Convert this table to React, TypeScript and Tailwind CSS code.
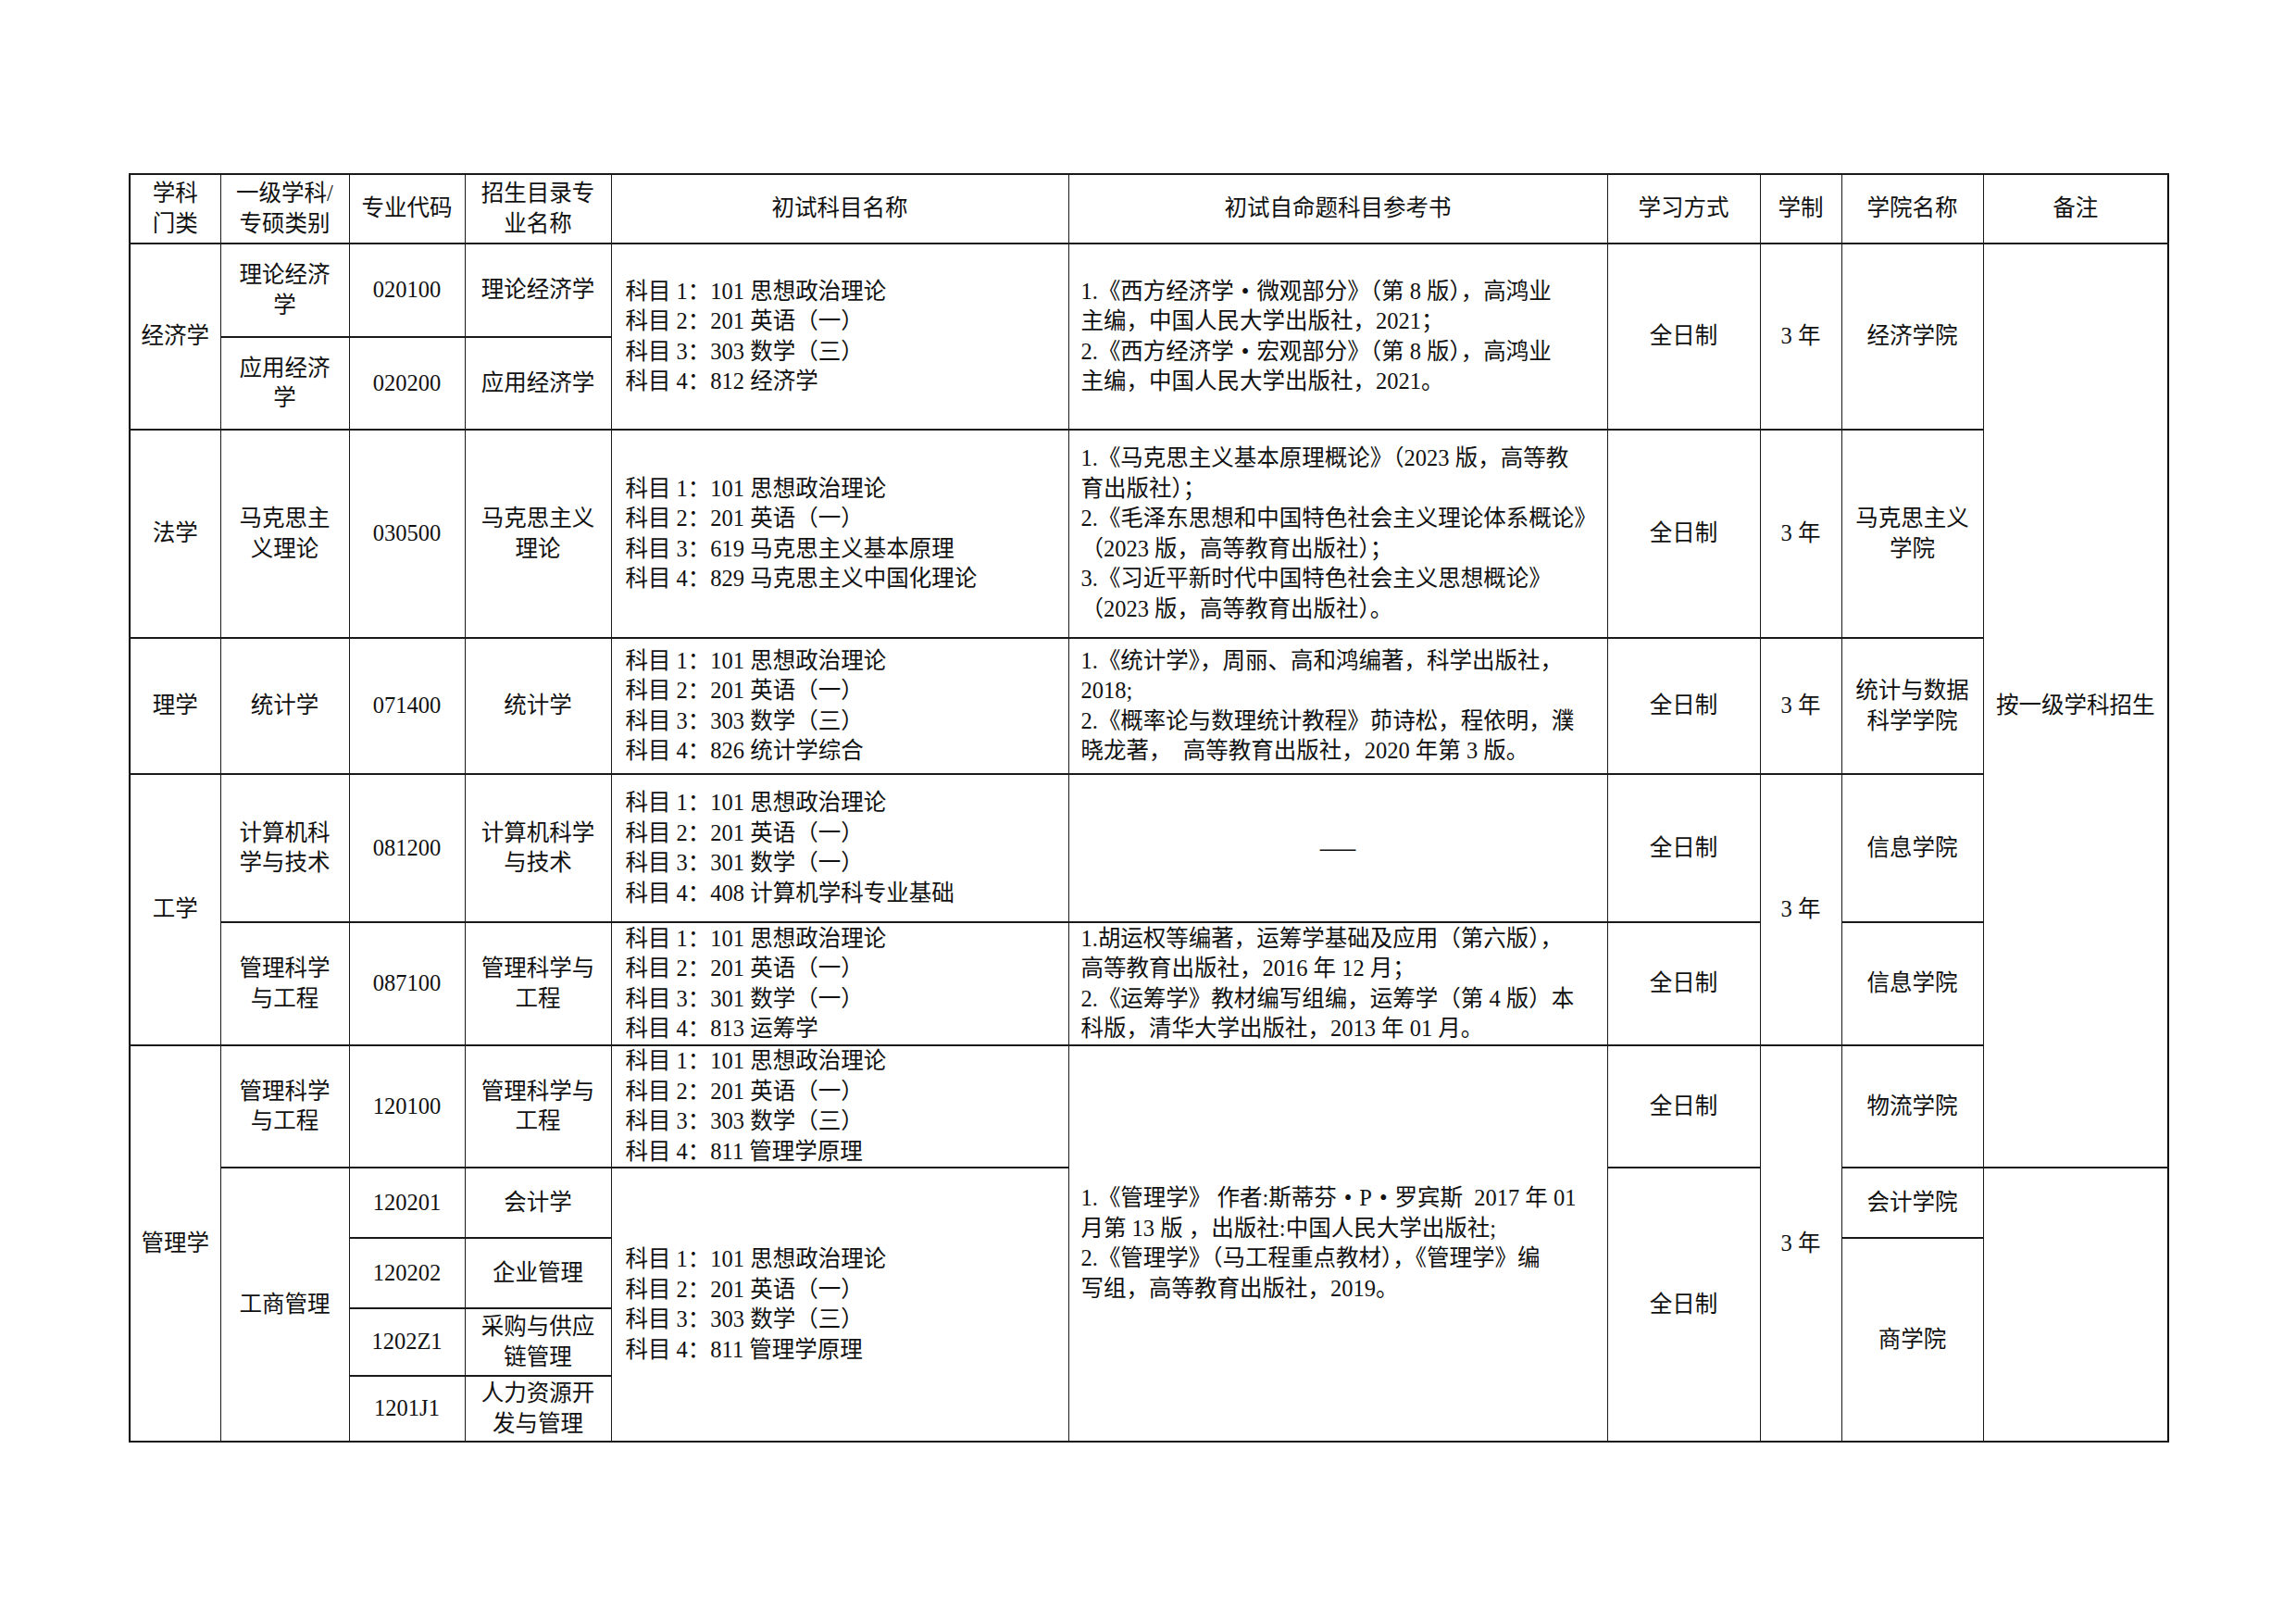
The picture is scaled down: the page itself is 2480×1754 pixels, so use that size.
import React from "react";

const font = { fontFamily: '"Liberation Serif", "Noto Sans CJK SC", serif' };

const cell = "border-x border-y-2 border-[#1a1a1a] text-center align-middle px-1 py-0";
const left = "border-x border-y-2 border-[#1a1a1a] text-left align-middle py-0";

// full-width bullet, as in the source document
function Line({ text }: { text: string }) {
  const parts = text.split("•");
  return (
    <div className="whitespace-pre">
      {parts.map((p, i) => (
        <React.Fragment key={i}>
          {i > 0 && <span className="inline-block w-[1em] text-center">•</span>}
          {p}
        </React.Fragment>
      ))}
    </div>
  );
}

function Lines({ items }: { items: string[] }) {
  return (
    <>
      {items.map((t, i) => (
        <Line key={i} text={t} />
      ))}
    </>
  );
}

const exams = {
  econ: ["科目 1：101 思想政治理论", "科目 2：201 英语（一）", "科目 3：303 数学（三）", "科目 4：812 经济学"],
  law: ["科目 1：101 思想政治理论", "科目 2：201 英语（一）", "科目 3：619 马克思主义基本原理", "科目 4：829 马克思主义中国化理论"],
  stat: ["科目 1：101 思想政治理论", "科目 2：201 英语（一）", "科目 3：303 数学（三）", "科目 4：826 统计学综合"],
  cs: ["科目 1：101 思想政治理论", "科目 2：201 英语（一）", "科目 3：301 数学（一）", "科目 4：408 计算机学科专业基础"],
  ms: ["科目 1：101 思想政治理论", "科目 2：201 英语（一）", "科目 3：301 数学（一）", "科目 4：813 运筹学"],
  mgmt: ["科目 1：101 思想政治理论", "科目 2：201 英语（一）", "科目 3：303 数学（三）", "科目 4：811 管理学原理"],
};

const books = {
  econ: [
    "1.《西方经济学•微观部分》（第 8 版），高鸿业",
    "主编，中国人民大学出版社，2021；",
    "2.《西方经济学•宏观部分》（第 8 版），高鸿业",
    "主编，中国人民大学出版社，2021。",
  ],
  law: [
    "1.《马克思主义基本原理概论》（2023 版，高等教",
    "育出版社）；",
    "2.《毛泽东思想和中国特色社会主义理论体系概论》",
    "（2023 版，高等教育出版社）；",
    "3.《习近平新时代中国特色社会主义思想概论》",
    "（2023 版，高等教育出版社）。",
  ],
  stat: [
    "1.《统计学》，周丽、高和鸿编著，科学出版社，",
    "2018;",
    "2.《概率论与数理统计教程》茆诗松，程依明，濮",
    "晓龙著，  高等教育出版社，2020 年第 3 版。",
  ],
  ms: [
    "1.胡运权等编著，运筹学基础及应用（第六版），",
    "高等教育出版社，2016 年 12 月；",
    "2.《运筹学》教材编写组编，运筹学（第 4 版）本",
    "科版，清华大学出版社，2013 年 01 月。",
  ],
  mgmt: [
    "1.《管理学》 作者:斯蒂芬•P•罗宾斯  2017 年 01",
    "月第 13 版 ，出版社:中国人民大学出版社;",
    "2.《管理学》（马工程重点教材），《管理学》编",
    "写组，高等教育出版社，2019。",
  ],
};

export default function App() {
  return (
    <div className="w-[2480px] h-[1754px] bg-white pt-[187px] pl-[139px] text-[#111]" style={font}>
      <table className="table-fixed border-collapse w-[2202px] border-2 border-black text-[24.5px] leading-[32.5px]">
        <colgroup>
          <col className="w-[98px]" />
          <col className="w-[139px]" />
          <col className="w-[125px]" />
          <col className="w-[158px]" />
          <col className="w-[494px]" />
          <col className="w-[582px]" />
          <col className="w-[165px]" />
          <col className="w-[88px]" />
          <col className="w-[153px]" />
          <col className="w-[200px]" />
        </colgroup>
        <tbody>
          <tr className="h-[75px]">
            <td className={cell}>学科<br />门类</td>
            <td className={cell}>一级学科/<br />专硕类别</td>
            <td className={cell}>专业代码</td>
            <td className={cell}>招生目录专<br />业名称</td>
            <td className={cell}>初试科目名称</td>
            <td className={cell}>初试自命题科目参考书</td>
            <td className={cell}>学习方式</td>
            <td className={cell}>学制</td>
            <td className={cell}>学院名称</td>
            <td className={cell}>备注</td>
          </tr>

          {/* 经济学 */}
          <tr className="h-[101px]">
            <td rowSpan={2} className={cell}>经济学</td>
            <td className={cell}>理论经济<br />学</td>
            <td className={cell}>020100</td>
            <td className={cell}>理论经济学</td>
            <td rowSpan={2} className={`${left} pl-[15px]`}><Lines items={exams.econ} /></td>
            <td rowSpan={2} className={`${left} pl-[13px]`}><Lines items={books.econ} /></td>
            <td rowSpan={2} className={cell}>全日制</td>
            <td rowSpan={2} className={cell}>3 年</td>
            <td rowSpan={2} className={cell}>经济学院</td>
            <td rowSpan={7} className={cell}>按一级学科招生</td>
          </tr>
          <tr className="h-[100px]">
            <td className={cell}>应用经济<br />学</td>
            <td className={cell}>020200</td>
            <td className={cell}>应用经济学</td>
          </tr>

          {/* 法学 */}
          <tr className="h-[225px]">
            <td className={cell}>法学</td>
            <td className={cell}>马克思主<br />义理论</td>
            <td className={cell}>030500</td>
            <td className={cell}>马克思主义<br />理论</td>
            <td className={`${left} pl-[15px]`}><Lines items={exams.law} /></td>
            <td className={`${left} pl-[13px]`}><Lines items={books.law} /></td>
            <td className={cell}>全日制</td>
            <td className={cell}>3 年</td>
            <td className={cell}>马克思主义<br />学院</td>
          </tr>

          {/* 理学 */}
          <tr className="h-[147px]">
            <td className={cell}>理学</td>
            <td className={cell}>统计学</td>
            <td className={cell}>071400</td>
            <td className={cell}>统计学</td>
            <td className={`${left} pl-[15px]`}><Lines items={exams.stat} /></td>
            <td className={`${left} pl-[13px]`}><Lines items={books.stat} /></td>
            <td className={cell}>全日制</td>
            <td className={cell}>3 年</td>
            <td className={cell}>统计与数据<br />科学学院</td>
          </tr>

          {/* 工学 */}
          <tr className="h-[160px]">
            <td rowSpan={2} className={cell}>工学</td>
            <td className={cell}>计算机科<br />学与技术</td>
            <td className={cell}>081200</td>
            <td className={cell}>计算机科学<br />与技术</td>
            <td className={`${left} pl-[15px]`}><Lines items={exams.cs} /></td>
            <td className={cell}><span className="font-['Noto_Sans_CJK_SC']">——</span></td>
            <td className={cell}>全日制</td>
            <td rowSpan={2} className={cell}>3 年</td>
            <td className={cell}>信息学院</td>
          </tr>
          <tr className="h-[133px]">
            <td className={cell}>管理科学<br />与工程</td>
            <td className={cell}>087100</td>
            <td className={cell}>管理科学与<br />工程</td>
            <td className={`${left} pl-[15px]`}><Lines items={exams.ms} /></td>
            <td className={`${left} pl-[13px]`}><Lines items={books.ms} /></td>
            <td className={cell}>全日制</td>
            <td className={cell}>信息学院</td>
          </tr>

          {/* 管理学 */}
          <tr className="h-[131px]">
            <td rowSpan={5} className={cell}>管理学</td>
            <td className={cell}>管理科学<br />与工程</td>
            <td className={cell}>120100</td>
            <td className={cell}>管理科学与<br />工程</td>
            <td className={`${left} pl-[15px]`}><Lines items={exams.mgmt} /></td>
            <td rowSpan={5} className={`${left} pl-[13px]`}><Lines items={books.mgmt} /></td>
            <td className={cell}>全日制</td>
            <td rowSpan={5} className={cell}>3 年</td>
            <td className={cell}>物流学院</td>
          </tr>
          <tr className="h-[76px]">
            <td rowSpan={4} className={cell}>工商管理</td>
            <td className={cell}>120201</td>
            <td className={cell}>会计学</td>
            <td rowSpan={4} className={`${left} pl-[15px]`}><Lines items={exams.mgmt} /></td>
            <td rowSpan={4} className={cell}>全日制</td>
            <td className={cell}>会计学院</td>
            <td rowSpan={4} className={cell}></td>
          </tr>
          <tr className="h-[76px]">
            <td className={cell}>120202</td>
            <td className={cell}>企业管理</td>
            <td rowSpan={3} className={cell}>商学院</td>
          </tr>
          <tr className="h-[73px]">
            <td className={cell}>1202Z1</td>
            <td className={cell}>采购与供应<br />链管理</td>
          </tr>
          <tr className="h-[71px]">
            <td className={cell}>1201J1</td>
            <td className={cell}>人力资源开<br />发与管理</td>
          </tr>
        </tbody>
      </table>
    </div>
  );
}
